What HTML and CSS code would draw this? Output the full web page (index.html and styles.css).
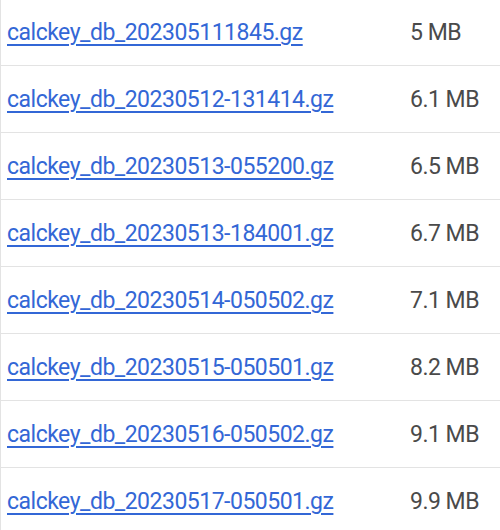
FILE: index.html
```html
<!DOCTYPE html>
<html>
<head>
<meta charset="utf-8">
<link rel="stylesheet" href="styles.css">
</head>
<body>
<div class="list">
  <div class="row"><a class="name" href="#">calckey_db_202305111845.gz</a><span class="size">5 MB</span></div>
  <div class="row"><a class="name" href="#">calckey_db_20230512-131414.gz</a><span class="size">6.1 MB</span></div>
  <div class="row"><a class="name" href="#">calckey_db_20230513-055200.gz</a><span class="size">6.5 MB</span></div>
  <div class="row"><a class="name" href="#">calckey_db_20230513-184001.gz</a><span class="size">6.7 MB</span></div>
  <div class="row"><a class="name" href="#">calckey_db_20230514-050502.gz</a><span class="size">7.1 MB</span></div>
  <div class="row"><a class="name" href="#">calckey_db_20230515-050501.gz</a><span class="size">8.2 MB</span></div>
  <div class="row"><a class="name" href="#">calckey_db_20230516-050502.gz</a><span class="size">9.1 MB</span></div>
  <div class="row"><a class="name" href="#">calckey_db_20230517-050501.gz</a><span class="size">9.9 MB</span></div>
</div>
</body>
</html>
```
FILE: styles.css
```css
html, body {
  margin: 0;
  padding: 0;
  background: #ffffff;
  overflow: hidden;
}
body {
  font-family: Roboto, "Noto Sans", sans-serif;
  font-size: 23px;
  letter-spacing: -0.5px;
}
.list {
  border-left: 1px solid #e3e3e3;
  display: flex;
  flex-direction: column;
  margin-top: -1px;
}
.row {
  display: flex;
  align-items: center;
  height: 66px;
  border-bottom: 1px solid #e3e3e3;
  box-sizing: content-box;
}
.name {
  width: 403px;
  padding-left: 6px;
  color: #3367d6;
  text-decoration: underline;
  text-decoration-thickness: 2px;
  text-underline-offset: 4px;
}
.size {
  color: #4a4a4a;
}
```
